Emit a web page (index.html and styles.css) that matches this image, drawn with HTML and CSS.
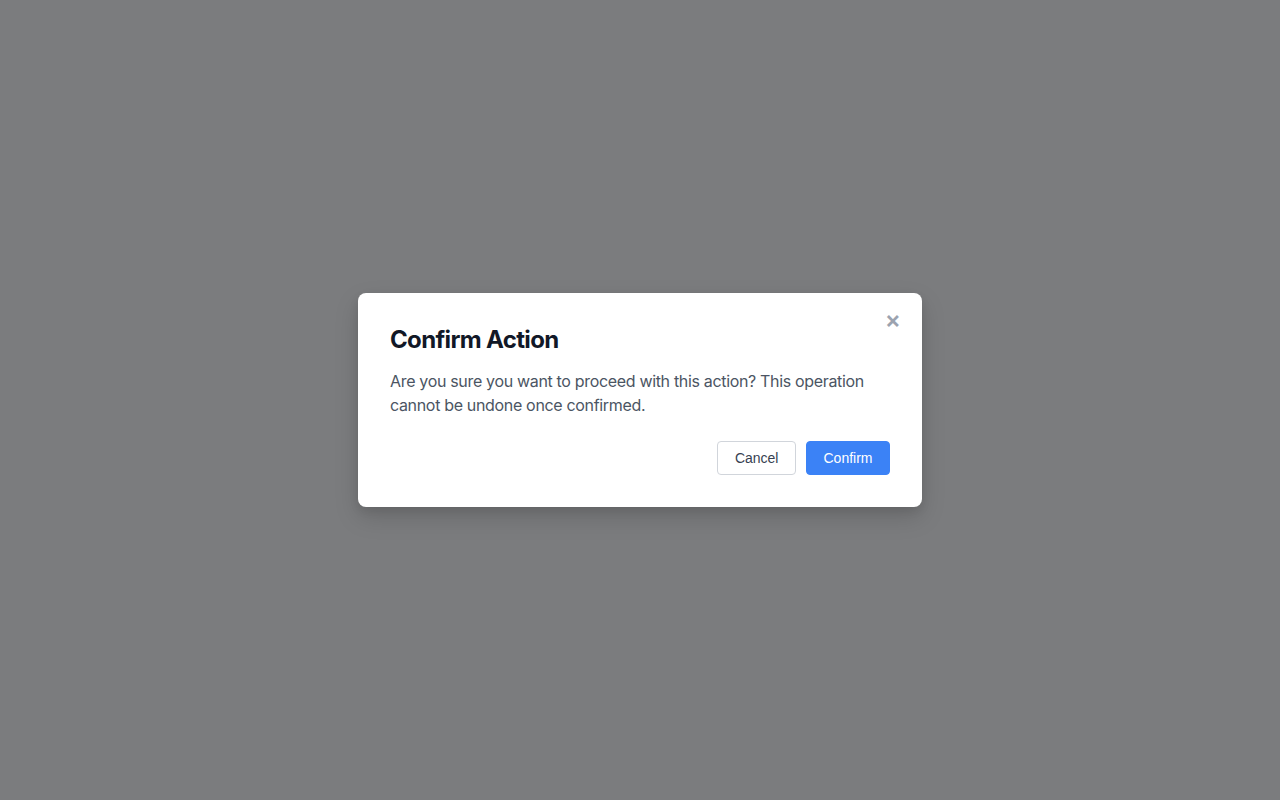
FILE: index.html
```html
<!DOCTYPE html>
<html lang="en">
<head>
<meta charset="utf-8">
<title>Confirm Action</title>
<link rel="stylesheet" href="styles.css">
</head>
<body>
<div class="overlay">
  <div class="modal" role="dialog" aria-labelledby="modal-title">
    <button class="close" aria-label="Close">&times;</button>
    <h2 class="title" id="modal-title">Confirm Action</h2>
    <p class="message">Are you sure you want to proceed with this action? This operation cannot be undone once confirmed.</p>
    <div class="actions">
      <button class="btn btn-cancel">Cancel</button>
      <button class="btn btn-confirm">Confirm</button>
    </div>
  </div>
</div>
</body>
</html>
```
FILE: styles.css
```css
* { box-sizing: border-box; }
html, body {
  margin: 0;
  padding: 0;
  height: 100%;
}
body {
  font-family: Inter, "Liberation Sans", sans-serif;
  background: #7b7c7e;
}
.overlay {
  height: 100vh;
  display: flex;
  align-items: center;
  justify-content: center;
}
.modal {
  position: relative;
  width: 564px;
  background: #ffffff;
  border-radius: 8px;
  padding: 32px;
  box-shadow: 0 10px 25px rgba(0, 0, 0, 0.15), 0 4px 10px rgba(0, 0, 0, 0.08);
}
.close {
  position: absolute;
  top: 15px;
  right: 21px;
  border: none;
  background: none;
  padding: 0;
  font-family: Inter, "Liberation Sans", sans-serif;
  font-size: 24px;
  line-height: 24px;
  font-weight: 600;
  color: #9ca3af;
  cursor: pointer;
}
.title {
  margin: 0 0 15px;
  font-size: 24px;
  line-height: 29px;
  font-weight: 700;
  letter-spacing: -0.65px;
  color: #111827;
}
.message {
  margin: 0;
  font-size: 16px;
  line-height: 24px;
  letter-spacing: -0.33px;
  color: #4b5563;
}
.actions {
  margin-top: 24px;
  display: flex;
  justify-content: flex-end;
  gap: 10px;
}
.btn {
  font-family: "Liberation Sans", Arial, sans-serif;
  font-size: 14px;
  line-height: 20px;
  padding: 6px 16.5px;
  border-radius: 4px;
  cursor: pointer;
}
.btn-cancel {
  background: #ffffff;
  border: 1px solid #d1d5db;
  color: #374151;
}
.btn-confirm {
  background: #3b82f6;
  border: 1px solid #3b82f6;
  color: #ffffff;
}
```
